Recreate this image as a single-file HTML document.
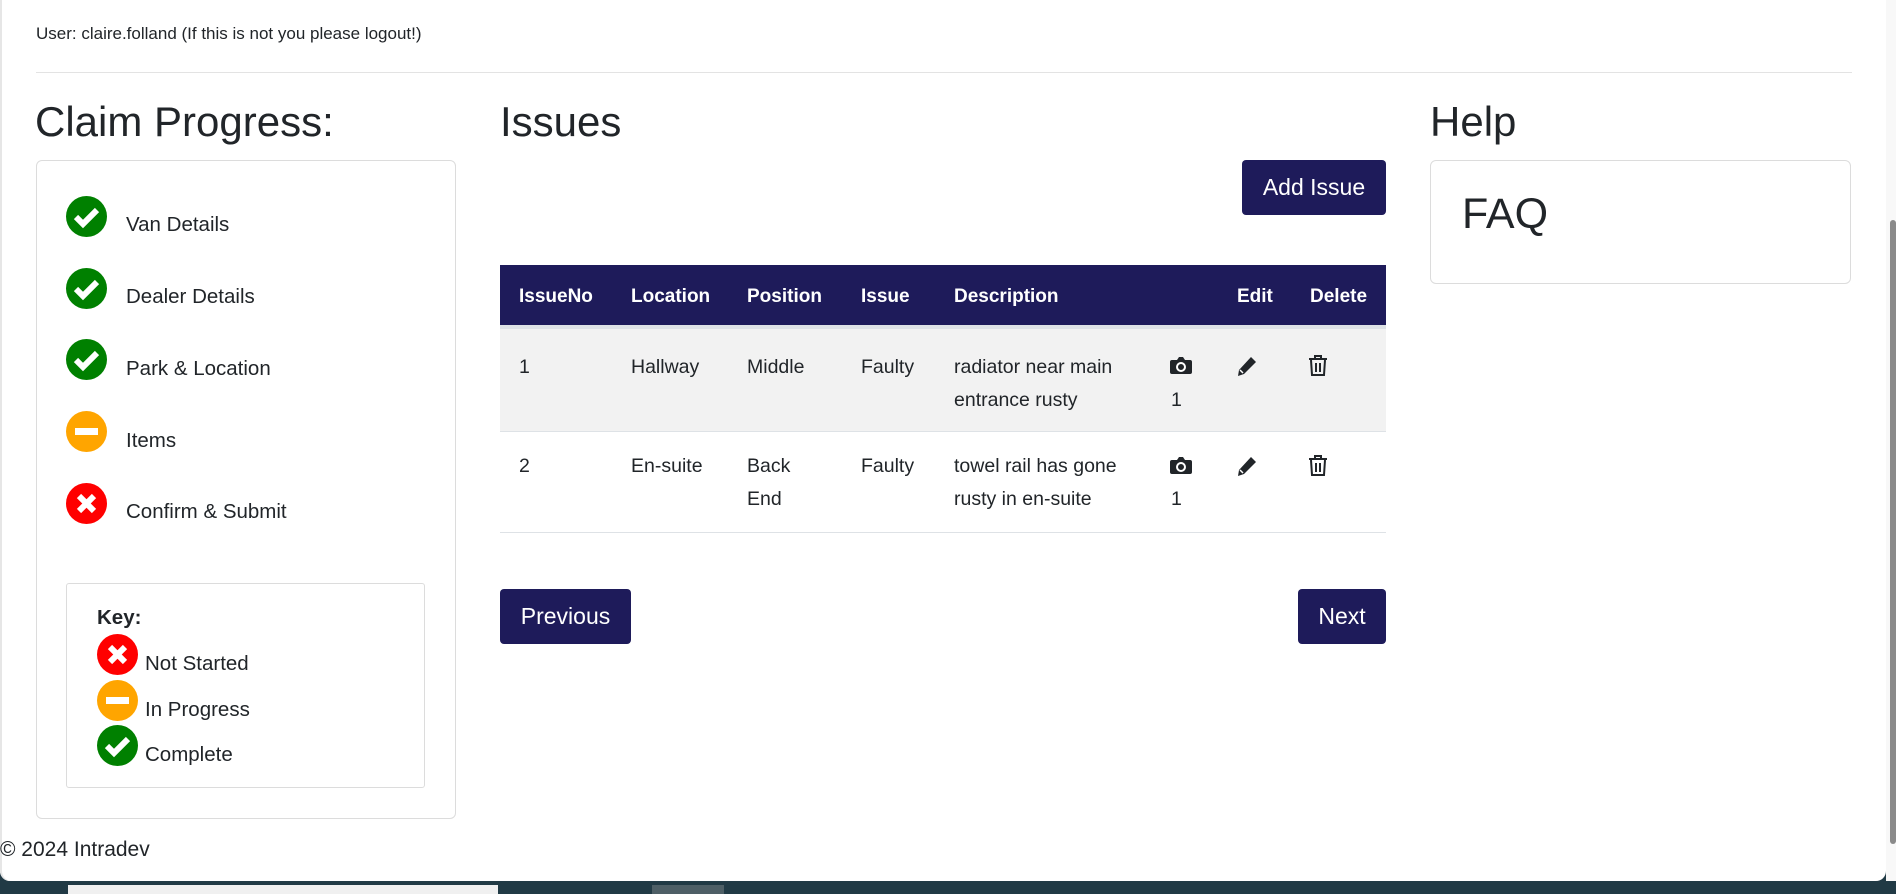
<!DOCTYPE html>
<html><head><meta charset="utf-8"><style>
*{margin:0;padding:0;box-sizing:border-box}
html,body{width:1896px;height:894px;overflow:hidden;background:#213a45;font-family:"Liberation Sans",Arial,sans-serif;color:#212529}
#page{position:absolute;left:0;top:0;width:1886px;height:881px;background:#fff;border-radius:0 0 10px 10px;box-shadow:inset 2px 0 0 #e6e6e6}
.a{position:absolute;white-space:nowrap}
.ic{position:absolute;width:41px;height:41px}
.btn{position:absolute;background:#1e1b5a;color:#fff;border-radius:4px;font-size:23px;display:flex;align-items:center;justify-content:center}
.card{position:absolute;border:1px solid #dcdcdc;border-radius:6px}
.t{font-size:20.5px}
</style></head><body>
<div id="page">
<div class="a" style="left:36px;top:24px;font-size:17px">User: claire.folland (If this is not you please logout!)</div>
<div class="a" style="left:36px;top:72px;width:1816px;height:1px;background:#e3e3e3"></div>

<div class="a" style="left:35px;top:98px;font-size:42px">Claim Progress:</div>
<div class="card" style="left:36px;top:160px;width:420px;height:659px"></div>

<svg width="0" height="0" style="position:absolute"><defs>
<g id="ok"><circle cx="20.5" cy="20.5" r="20.5" fill="#008000"/><path d="M10 21l7 7 14-14" stroke="#fff" stroke-width="6" fill="none"/></g>
<g id="ip"><circle cx="20.5" cy="20.5" r="20.5" fill="#ffa500"/><rect x="9" y="17" width="23" height="7" fill="#fff"/></g>
<g id="no"><circle cx="20.5" cy="20.5" r="20.5" fill="#f00"/><path d="M13 13l15 15M28 13l-15 15" stroke="#fff" stroke-width="6"/></g>
</defs></svg>

<svg class="ic" style="left:66px;top:196px"><use href="#ok"/></svg>
<div class="a t" style="left:126px;top:213px">Van Details</div>
<svg class="ic" style="left:66px;top:268px"><use href="#ok"/></svg>
<div class="a t" style="left:126px;top:285px">Dealer Details</div>
<svg class="ic" style="left:66px;top:339px"><use href="#ok"/></svg>
<div class="a t" style="left:126px;top:357px">Park &amp; Location</div>
<svg class="ic" style="left:66px;top:411px"><use href="#ip"/></svg>
<div class="a t" style="left:126px;top:429px">Items</div>
<svg class="ic" style="left:66px;top:483px"><use href="#no"/></svg>
<div class="a t" style="left:126px;top:500px">Confirm &amp; Submit</div>

<div class="card" style="left:66px;top:583px;width:359px;height:205px;border-radius:3px"></div>
<div class="a t" style="left:97px;top:606px;font-weight:bold">Key:</div>
<svg class="ic" style="left:97px;top:634px"><use href="#no"/></svg>
<div class="a t" style="left:145px;top:652px">Not Started</div>
<svg class="ic" style="left:97px;top:680px"><use href="#ip"/></svg>
<div class="a t" style="left:145px;top:698px">In Progress</div>
<svg class="ic" style="left:97px;top:725px"><use href="#ok"/></svg>
<div class="a t" style="left:145px;top:743px">Complete</div>

<div class="a" style="left:500px;top:98px;font-size:42px">Issues</div>
<div class="btn" style="left:1242px;top:160px;width:144px;height:55px">Add Issue</div>

<div class="a" style="left:500px;top:265px;width:886px;height:64px;background:#1e1b5a;border-bottom:4px solid #dee2e6"></div>
<div class="a" style="left:500px;top:329px;width:886px;height:103px;background:#f2f2f2;border-bottom:1px solid #dee2e6"></div>
<div class="a" style="left:500px;top:532px;width:886px;height:1px;background:#dee2e6"></div>
<div style="color:#fff;font-weight:bold;font-size:19px">
<div class="a" style="left:519px;top:286px">IssueNo</div>
<div class="a" style="left:631px;top:286px">Location</div>
<div class="a" style="left:747px;top:286px">Position</div>
<div class="a" style="left:861px;top:286px">Issue</div>
<div class="a" style="left:954px;top:286px">Description</div>
<div class="a" style="left:1237px;top:286px">Edit</div>
<div class="a" style="left:1310px;top:286px">Delete</div>
</div>
<div style="font-size:19.5px;line-height:33px">
<div class="a" style="left:519px;top:351px">1</div>
<div class="a" style="left:631px;top:351px">Hallway</div>
<div class="a" style="left:747px;top:351px">Middle</div>
<div class="a" style="left:861px;top:351px">Faulty</div>
<div class="a" style="left:954px;top:351px">radiator near main<br>entrance rusty</div>
<div class="a" style="left:1171px;top:384px">1</div>
<div class="a" style="left:519px;top:450px">2</div>
<div class="a" style="left:631px;top:450px">En-suite</div>
<div class="a" style="left:747px;top:450px">Back<br>End</div>
<div class="a" style="left:861px;top:450px">Faulty</div>
<div class="a" style="left:954px;top:450px">towel rail has gone<br>rusty in en-suite</div>
<div class="a" style="left:1171px;top:483px">1</div>
</div>
<svg class="a" style="left:1170px;top:356px" width="22" height="18" viewBox="0 0 22 18"><path d="M2 4h5l2-3h4l2 3h5a2 2 0 0 1 2 2v10a2 2 0 0 1-2 2H2a2 2 0 0 1-2-2V6a2 2 0 0 1 2-2z" fill="#212529"/><circle cx="11" cy="11" r="4" fill="none" stroke="#fff" stroke-width="2"/></svg>
<svg class="a" style="left:1170px;top:456px" width="22" height="18" viewBox="0 0 22 18"><path d="M2 4h5l2-3h4l2 3h5a2 2 0 0 1 2 2v10a2 2 0 0 1-2 2H2a2 2 0 0 1-2-2V6a2 2 0 0 1 2-2z" fill="#212529"/><circle cx="11" cy="11" r="4" fill="none" stroke="#fff" stroke-width="2"/></svg>
<svg class="a" style="left:1236px;top:355px" width="22" height="22" viewBox="0 0 22 22"><path d="M15 2l5 5L8 19l-6 2 1-6z" fill="#212529"/><path d="M4 15l3 3" stroke="#fff" stroke-width="1.5"/></svg>
<svg class="a" style="left:1236px;top:455px" width="22" height="22" viewBox="0 0 22 22"><path d="M15 2l5 5L8 19l-6 2 1-6z" fill="#212529"/><path d="M4 15l3 3" stroke="#fff" stroke-width="1.5"/></svg>
<svg class="a" style="left:1308px;top:355px" width="20" height="22" viewBox="0 0 20 22"><path d="M1 4h18M7 4V1h6v3M3 5l1 15h12l1-15M8 8v9M12 8v9" stroke="#212529" stroke-width="2" fill="none"/></svg>
<svg class="a" style="left:1308px;top:455px" width="20" height="22" viewBox="0 0 20 22"><path d="M1 4h18M7 4V1h6v3M3 5l1 15h12l1-15M8 8v9M12 8v9" stroke="#212529" stroke-width="2" fill="none"/></svg>

<div class="btn" style="left:500px;top:589px;width:131px;height:55px">Previous</div>
<div class="btn" style="left:1298px;top:589px;width:88px;height:55px">Next</div>

<div class="a" style="left:1430px;top:98px;font-size:42px">Help</div>
<div class="card" style="left:1430px;top:160px;width:421px;height:124px"></div>
<div class="a" style="left:1462px;top:190px;font-size:43px">FAQ</div>

<div class="a" style="left:0;top:838px;font-size:21px">© 2024 Intradev</div>
</div>
<div class="a" style="left:1886px;top:0;width:10px;height:881px;background:#f8f8f8"></div>
<div class="a" style="left:1890px;top:220px;width:6px;height:624px;background:#8a8a8a;border-radius:3px"></div>
<div class="a" style="left:68px;top:885px;width:430px;height:9px;background:#f0f0f0"></div>
<div class="a" style="left:652px;top:885px;width:72px;height:9px;background:#4e5f66"></div>
</body></html>
